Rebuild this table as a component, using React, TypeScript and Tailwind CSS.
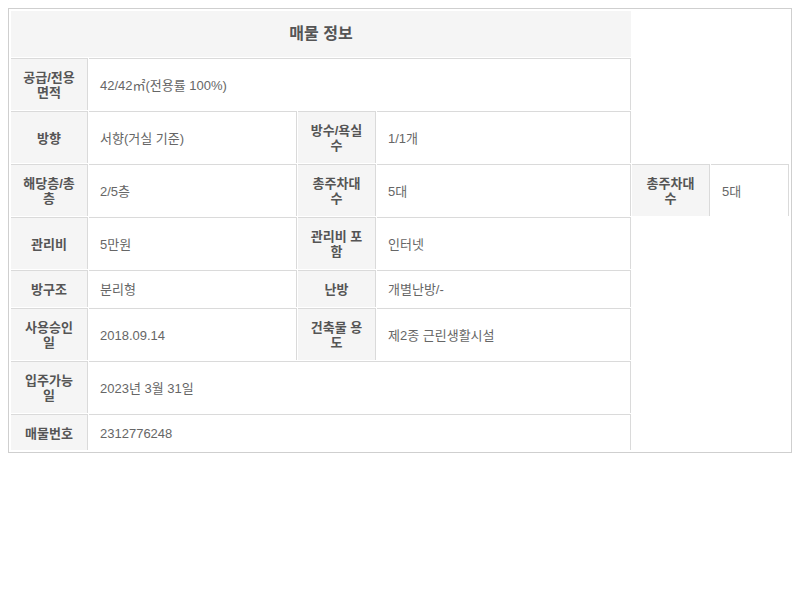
const TH = "border-t border-r border-[#dadada] bg-[#f5f5f5] px-[10px] pt-[11px] text-center text-[13px] font-bold leading-[15px] text-[#555]";
const TD = "border-t border-r border-[#dadada] bg-white pl-[11px] pr-2 pt-[11px] text-left text-[13px] font-normal leading-[15px] text-[#666]";

const ROWS: [string, string, string?, string?, string?, string?][] = [
  ["공급/전용 면적", "42/42㎡(전용률 100%)"],
  ["방향", "서향(거실 기준)", "방수/욕실 수", "1/1개"],
  ["해당층/총층", "2/5층", "총주차대 수", "5대", "총주차대 수", "5대"],
  ["관리비", "5만원", "관리비 포함", "인터넷"],
  ["방구조", "분리형", "난방", "개별난방/-"],
  ["사용승인일", "2018.09.14", "건축물 용도", "제2종 근린생활시설"],
  ["입주가능일", "2023년 3월 31일"],
  ["매물번호", "2312776248"],
];

export default function App() {
  return (
    <div className="bg-white font-['Liberation_Sans','Noto_Sans_CJK_KR',sans-serif]">
      <div className="m-2 border border-[#cfcfcf] p-px">
        <table className="w-full table-fixed border-separate border-spacing-px">
          <colgroup>
            <col className="w-[77px]" />
            <col className="w-[208px]" />
            <col className="w-[78px]" />
            <col className="w-[254px]" />
            <col className="w-[78px]" />
            <col className="w-[78px]" />
          </colgroup>
          <tbody>
            <tr>
              <th colSpan={4} className="h-[46px] bg-[#f5f5f5] text-center text-base font-bold leading-5 text-[#555]">
                매물 정보
              </th>
            </tr>
            {ROWS.map((r, i) => {
              const pb = i === ROWS.length - 1 ? "pb-[9px]" : "pb-[10px]";
              return (
                <tr key={i}>
                  <th className={`${TH} ${pb}`}>{r[0]}</th>
                  <td colSpan={r.length === 2 ? 3 : 1} className={`${TD} ${pb}`}>{r[1]}</td>
                  {r[2] && <th className={`${TH} ${pb}`}>{r[2]}</th>}
                  {r[3] && <td className={`${TD} ${pb}`}>{r[3]}</td>}
                  {r[4] && <th className={`${TH} ${pb}`}>{r[4]}</th>}
                  {r[5] && <td className={`${TD} ${pb}`}>{r[5]}</td>}
                </tr>
              );
            })}
          </tbody>
        </table>
      </div>
    </div>
  );
}
